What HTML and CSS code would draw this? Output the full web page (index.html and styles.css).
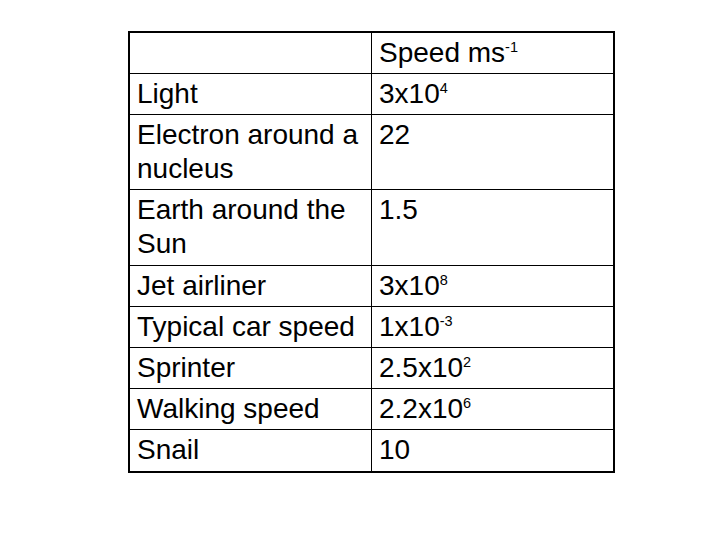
FILE: index.html
```html
<!DOCTYPE html>
<html lang="en">
<head>
<meta charset="utf-8">
<title>Speeds</title>
<link rel="stylesheet" href="styles.css">
</head>
<body>
<div class="slide">
  <div class="speed-table">
    <div class="cell"></div>
    <div class="cell">Speed ms<sup class="exp">-1</sup></div>
    <div class="cell">Light</div>
    <div class="cell">3x10<sup class="exp">4</sup></div>
    <div class="cell">Electron around a nucleus</div>
    <div class="cell">22</div>
    <div class="cell">Earth around the Sun</div>
    <div class="cell">1.5</div>
    <div class="cell">Jet airliner</div>
    <div class="cell">3x10<sup class="exp">8</sup></div>
    <div class="cell">Typical car speed</div>
    <div class="cell">1x10<sup class="exp">-3</sup></div>
    <div class="cell">Sprinter</div>
    <div class="cell">2.5x10<sup class="exp">2</sup></div>
    <div class="cell">Walking speed</div>
    <div class="cell">2.2x10<sup class="exp">6</sup></div>
    <div class="cell">Snail</div>
    <div class="cell">10</div>
  </div>
</div>
</body>
</html>
```
FILE: styles.css
```css
* {
  box-sizing: border-box;
}

html, body {
  margin: 0;
  padding: 0;
  background: #ffffff;
}

.slide {
  width: 728px;
  height: 546px;
  padding: 31px 0 0 128px;
}

.speed-table {
  display: grid;
  grid-template-columns: 241px 241px;
  grid-template-rows: 40px 40px 74px 75px 40px 40px 40px 40px 41px;
  gap: 1px;
  width: 487px;
  border: 2px solid #000000;
  background: #000000;
  font-family: "Liberation Sans", Arial, sans-serif;
  font-size: 28px;
  line-height: 34px;
  color: #000000;
}

.cell {
  background: #ffffff;
  padding: 3px 7px 3px 7px;
}

.exp {
  font-size: 14.5px;
  line-height: 0;
  vertical-align: 10px;
}
```
